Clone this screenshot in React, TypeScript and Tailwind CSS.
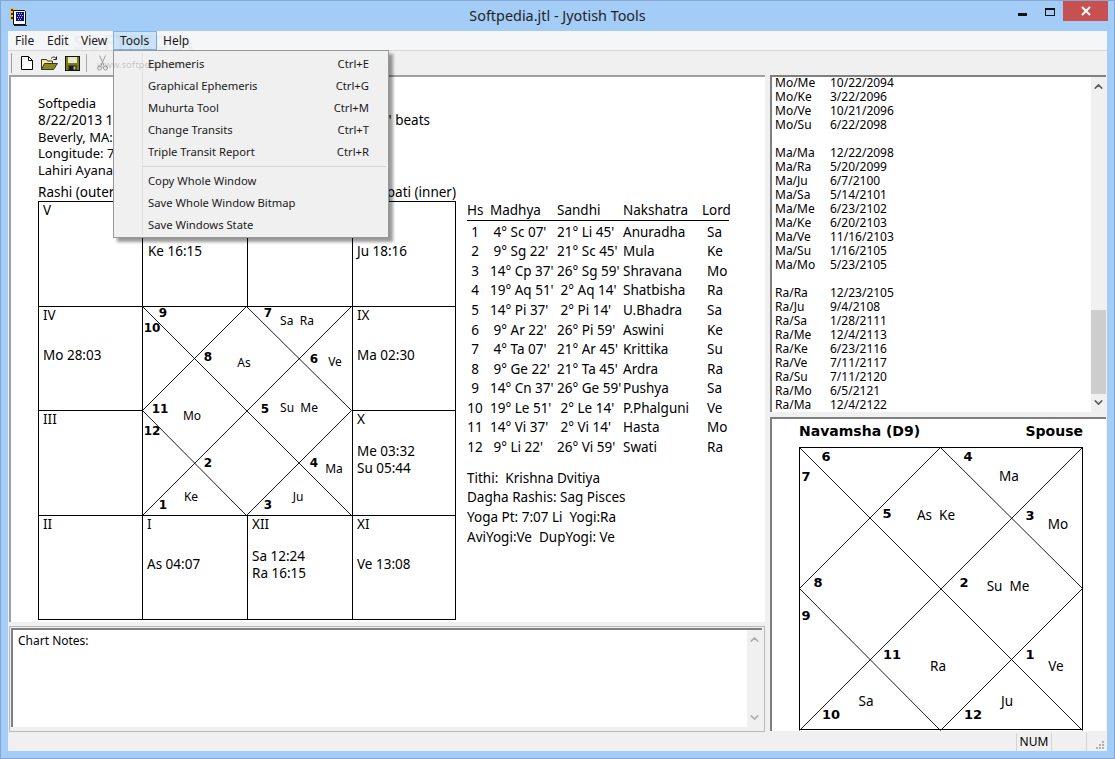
import { ChevronDown, ChevronUp } from 'lucide-react';

const MENU_ITEMS = [
  { label: 'Ephemeris', keys: 'Ctrl+E' },
  { label: 'Graphical Ephemeris', keys: 'Ctrl+G' },
  { label: 'Muhurta Tool', keys: 'Ctrl+M' },
  { label: 'Change Transits', keys: 'Ctrl+T' },
  { label: 'Triple Transit Report', keys: 'Ctrl+R' },
];

const MENU_ITEMS_2 = ['Copy Whole Window', 'Save Whole Window Bitmap', 'Save Windows State'];

const HOUSES = [
  ['1', " 4° Sc 07'", "21° Li 45'", 'Anuradha', 'Sa'],
  ['2', " 9° Sg 22'", "21° Sc 45'", 'Mula', 'Ke'],
  ['3', "14° Cp 37'", "26° Sg 59'", 'Shravana', 'Mo'],
  ['4', "19° Aq 51'", " 2° Aq 14'", 'Shatbisha', 'Ra'],
  ['5', "14° Pi 37'", " 2° Pi 14'", 'U.Bhadra', 'Sa'],
  ['6', " 9° Ar 22'", "26° Pi 59'", 'Aswini', 'Ke'],
  ['7', " 4° Ta 07'", "21° Ar 45'", 'Krittika', 'Su'],
  ['8', " 9° Ge 22'", "21° Ta 45'", 'Ardra', 'Ra'],
  ['9', "14° Cn 37'", "26° Ge 59'", 'Pushya', 'Sa'],
  ['10', "19° Le 51'", " 2° Le 14'", 'P.Phalguni', 'Ve'],
  ['11', "14° Vi 37'", " 2° Vi 14'", 'Hasta', 'Mo'],
  ['12', " 9° Li 22'", "26° Vi 59'", 'Swati', 'Ra'],
];

const DASHAS = [
  ['Mo/Me', '10/22/2094'],
  ['Mo/Ke', '3/22/2096'],
  ['Mo/Ve', '10/21/2096'],
  ['Mo/Su', '6/22/2098'],
  [],
  ['Ma/Ma', '12/22/2098'],
  ['Ma/Ra', '5/20/2099'],
  ['Ma/Ju', '6/7/2100'],
  ['Ma/Sa', '5/14/2101'],
  ['Ma/Me', '6/23/2102'],
  ['Ma/Ke', '6/20/2103'],
  ['Ma/Ve', '11/16/2103'],
  ['Ma/Su', '1/16/2105'],
  ['Ma/Mo', '5/23/2105'],
  [],
  ['Ra/Ra', '12/23/2105'],
  ['Ra/Ju', '9/4/2108'],
  ['Ra/Sa', '1/28/2111'],
  ['Ra/Me', '12/4/2113'],
  ['Ra/Ke', '6/23/2116'],
  ['Ra/Ve', '7/11/2117'],
  ['Ra/Su', '7/11/2120'],
  ['Ra/Mo', '6/5/2121'],
  ['Ra/Ma', '12/4/2122'],
];

const SMALL_LABELS = [
  { t: '9', b: true, c: 'left-[21px] top-[7px]' },
  { t: '10', b: true, c: 'left-[10px] top-[22px]' },
  { t: '7', b: true, c: 'left-[126px] top-[7px]' },
  { t: 'Sa  Ra', c: 'left-[155px] top-[15px]' },
  { t: '8', b: true, c: 'left-[66px] top-[51px]' },
  { t: 'As', c: 'left-[102px] top-[57px]' },
  { t: '6', b: true, c: 'left-[172px] top-[53px]' },
  { t: 'Ve', c: 'left-[193px] top-[56px]' },
  { t: '11', b: true, c: 'left-[18px] top-[103px]' },
  { t: 'Mo', c: 'left-[50px] top-[110px]' },
  { t: '5', b: true, c: 'left-[123px] top-[103px]' },
  { t: 'Su  Me', c: 'left-[157px] top-[102px]' },
  { t: '12', b: true, c: 'left-[10px] top-[125px]' },
  { t: '2', b: true, c: 'left-[66px] top-[157px]' },
  { t: '4', b: true, c: 'left-[172px] top-[157px]' },
  { t: 'Ma', c: 'left-[192px] top-[163px]' },
  { t: 'Ke', c: 'left-[49px] top-[191px]' },
  { t: 'Ju', c: 'left-[156px] top-[191px]' },
  { t: '1', b: true, c: 'left-[21px] top-[199px]' },
  { t: '3', b: true, c: 'left-[126px] top-[199px]' },
];

const NAVAMSHA_LABELS = [
  { t: '6', b: true, c: 'left-[27px] top-[9px]' },
  { t: '7', b: true, c: 'left-[7px] top-[29px]' },
  { t: '4', b: true, c: 'left-[169px] top-[9px]' },
  { t: 'Ma', c: 'left-[210px] top-[30px]' },
  { t: '5', b: true, c: 'left-[88px] top-[66px]' },
  { t: 'As  Ke', c: 'left-[137px] top-[69px]' },
  { t: '3', b: true, c: 'left-[231px] top-[68px]' },
  { t: 'Mo', c: 'left-[259px] top-[78px]' },
  { t: '8', b: true, c: 'left-[19px] top-[135px]' },
  { t: '2', b: true, c: 'left-[165px] top-[135px]' },
  { t: 'Su  Me', c: 'left-[209px] top-[140px]' },
  { t: '9', b: true, c: 'left-[7px] top-[168px]' },
  { t: '11', b: true, c: 'left-[93px] top-[207px]' },
  { t: 'Ra', c: 'left-[139px] top-[220px]' },
  { t: '1', b: true, c: 'left-[231px] top-[207px]' },
  { t: 'Ve', c: 'left-[257px] top-[220px]' },
  { t: 'Sa', c: 'left-[67px] top-[255px]' },
  { t: 'Ju', c: 'left-[208px] top-[255px]' },
  { t: '10', b: true, c: 'left-[32px] top-[267px]' },
  { t: '12', b: true, c: 'left-[174px] top-[267px]' },
];

type Label = { t: string; b?: boolean; c: string };

// the diamond lines of the north indian chart, s is the side of the square in px
function DiamondLines({ s }: { s: number }) {
  const m = Math.floor(s / 2);
  return (
    <svg className="absolute left-0 top-0" width={s + 1} height={s + 1} viewBox={`-0.5 -0.5 ${s + 1} ${s + 1}`} fill="none" stroke="#000" strokeWidth="0.9">
      <path d={`M0 0L${s} ${s}M${s} 0L0 ${s}`} />
      <path d={`M${m} 0L0 ${m}L${m} ${s}L${s} ${m}Z`} />
    </svg>
  );
}

function ChartLabels({ labels, big }: { labels: Label[]; big?: boolean }) {
  return (
    <>
      {labels.map((l) => (
        <span
          key={l.t}
          className={`absolute -translate-x-1/2 -translate-y-1/2 leading-none whitespace-pre ${l.c} ${
            l.b
              ? `font-['DejaVu_Sans',sans-serif] font-bold ${big ? 'text-[13px]' : 'text-[12px]'}`
              : big
                ? 'text-[13.5px]'
                : 'text-[12px]'
          }`}
        >
          {l.t}
        </span>
      ))}
    </>
  );
}

function Cell({ className, roman, children }: { className?: string; roman?: string; children?: React.ReactNode }) {
  return (
    <div className={`pl-[4px] leading-[17px] ${className ?? ''}`}>
      <div className="h-[17px]">{roman}</div>
      {children}
    </div>
  );
}

function Rashi() {
  return (
    <div className="w-[418px] h-[419px] border border-black grid grid-cols-[104px_105px_105px_102px] grid-rows-[105px_104px_105px_103px] text-[13.5px]">
      <Cell className="border-r border-b border-black" roman="V" />
      <Cell className="border-r border-b border-black">
        <div className="mt-[24px] pl-[1px]">Ke 16:15</div>
      </Cell>
      <Cell className="border-r border-b border-black" />
      <Cell className="border-b border-black">
        <div className="mt-[24px]">Ju 18:16</div>
      </Cell>

      <Cell className="border-r border-b border-black" roman="IV">
        <div className="mt-[23px]">Mo 28:03</div>
      </Cell>
      <div className="col-span-2 row-span-2 border-r border-b border-black relative">
        <div className="absolute -left-px -top-px">
          <DiamondLines s={209} />
          <ChartLabels labels={SMALL_LABELS} />
        </div>
      </div>
      <Cell className="border-b border-black" roman="IX">
        <div className="mt-[23px]">Ma 02:30</div>
      </Cell>

      <Cell className="border-r border-b border-black" roman="III" />
      <Cell className="border-b border-black" roman="X">
        <div className="mt-[15px]">Me 03:32</div>
        <div>Su 05:44</div>
      </Cell>

      <Cell className="border-r border-black" roman="II" />
      <Cell className="border-r border-black" roman="I">
        <div className="mt-[23px]">As 04:07</div>
      </Cell>
      <Cell className="border-r border-black" roman="XII">
        <div className="mt-[15px]">Sa 12:24</div>
        <div>Ra 16:15</div>
      </Cell>
      <Cell roman="XI">
        <div className="mt-[23px]">Ve 13:08</div>
      </Cell>
    </div>
  );
}

function HouseTable() {
  return (
    <div className="text-[13.5px] text-black">
      <div className="w-[262px] h-[20px] grid grid-cols-[23px_67px_66px_79px_27px] items-center border-b-[1.5px] border-black mb-[1.5px]">
        <span>Hs</span>
        <span>Madhya</span>
        <span>Sandhi</span>
        <span>Nakshatra</span>
        <span>Lord</span>
      </div>
      {HOUSES.map((h) => (
        <div key={h[0]} className="h-[19.6px] grid grid-cols-[23px_67px_66px_79px_27px] items-center whitespace-pre">
          <span className="w-[16px] text-center">{h[0]}</span>
          <span>{h[1]}</span>
          <span>{h[2]}</span>
          <span>{h[3]}</span>
          <span className="pl-[5px]">{h[4]}</span>
        </div>
      ))}
      <div className="mt-[11.5px] leading-[19.6px] whitespace-pre">
        <div>Tithi:  Krishna Dvitiya</div>
        <div>Dagha Rashis: Sag Pisces</div>
        <div>Yoga Pt: 7:07 Li  Yogi:Ra</div>
        <div>AviYogi:Ve  DupYogi: Ve</div>
      </div>
    </div>
  );
}

function ScrollBar({ faded, children }: { faded?: boolean; children?: React.ReactNode }) {
  return (
    <div className={`w-[15px] shrink-0 bg-[#f0f0f0] flex flex-col items-center relative ${faded ? 'text-[#b0b0b0]' : 'text-[#606060]'}`}>
      <ChevronUp size={13} strokeWidth={3} className="mt-[3px]" />
      <div className="flex-1 w-full">{children}</div>
      <ChevronDown size={13} strokeWidth={3} className="mb-[3px]" />
    </div>
  );
}

function AppIcon() {
  return (
    <svg width="17" height="18" viewBox="0 0 17 18" className="ml-[9px]">
      <rect x="0" y="0" width="5" height="12" fill="#f0c020" />
      <path d="M1 1h2v2h-2zM1 5h2v2h-2zM1 9h2v2h-2z" fill="#2030a0" />
      <path d="M3.500 2.500h11l1 1v13h-12z" fill="#fff" stroke="#101010" />
      <rect x="6" y="4" width="8" height="9" fill="#101080" />
      <path d="M7 5h1v1h-1zM9 5h1v1h-1zM11 5h1v1h-1zM8 7h1v1h-1zM10 7h1v1h-1zM12 7h1v1h-1zM7 9h1v1h-1zM9 9h1v1h-1zM11 9h1v1h-1zM8 11h1v1h-1zM10 11h1v1h-1z" fill="#c8d0f8" />
      <path d="M4 17h13v1h-13z" fill="#202020" />
    </svg>
  );
}

function Toolbar() {
  return (
    <div className="h-[24px] bg-[#f0f0f0] flex items-center relative">
      <div className="ml-[3px] w-[2px] h-[20px] border-l border-[#a0a0a0] border-r-white" />
      <svg width="14" height="16" viewBox="0 0 14 16" className="ml-[7px]" fill="#fff" stroke="#000">
        <path d="M1.500 1.500h7l4 4v9h-11z" />
        <path d="M8.500 1.500v4h4" fill="none" />
      </svg>
      <svg width="17" height="15" viewBox="0 0 17 15" className="ml-[7px]">
        <path d="M.5 3.500h5l1 1.500h5v8h-11z" fill="#ffe99a" stroke="#333" />
        <path d="M.5 13.500l3-6h13l-4 6z" fill="#8c8a1c" stroke="#333" />
        <path d="M10 2.500c2-2 4-2 5.500 .5M15.500 .5v3h-3" fill="none" stroke="#222" />
      </svg>
      <svg width="15" height="15" viewBox="0 0 15 15" className="ml-[7px]">
        <rect x=".5" y=".5" width="14" height="14" fill="#7c7c14" stroke="#111" />
        <rect x="3" y="1" width="9" height="6" fill="#e8e8c8" />
        <rect x="3.500" y="9.500" width="8" height="5" fill="#1a1a1a" />
        <rect x="8.500" y="10.500" width="2" height="3" fill="#bbb" />
      </svg>
      <div className="ml-[6px] w-px h-[18px] bg-[#a8a8a8]" />
      <svg width="11" height="16" viewBox="0 0 11 16" className="ml-[10px]" fill="none" stroke="#9c9c9c">
        <path d="M2.500 .5l4.500 10M8.500 .5l-4.500 10" />
        <circle cx="2.500" cy="13" r="2" />
        <circle cx="8.500" cy="13" r="2" />
      </svg>
      {/* site watermark, printed over the whole picture */}
      <span className="absolute left-[89px] top-[9px] z-30 text-[9.5px] leading-none text-[rgba(0,0,0,0.2)] pointer-events-none">www.softpedia.com</span>
    </div>
  );
}

function ToolsMenu() {
  return (
    <div className="absolute left-[-1px] top-full w-[276px] h-[188px] bg-[#f0f0f0] border border-[#979797] shadow-[4px_4px_3px_rgba(0,0,0,0.4)] z-20 py-[2px] text-[11.25px] text-[#1a1a1a]">
      <div className="absolute left-[28px] top-[2px] bottom-[2px] w-px bg-[#e0e0e0]" />
      {MENU_ITEMS.map((m) => (
        <div key={m.label} className="h-[22px] flex items-center justify-between pl-[34px] pr-[19px]">
          <span>{m.label}</span>
          <span>{m.keys}</span>
        </div>
      ))}
      <div className="h-[7px] flex items-center pl-[29px] pr-[2px]">
        <div className="w-full h-px bg-[#d4d4d4]" />
      </div>
      {MENU_ITEMS_2.map((m) => (
        <div key={m} className="h-[22px] flex items-center pl-[34px]">
          {m}
        </div>
      ))}
    </div>
  );
}

function MenuBar() {
  return (
    <div className="h-[19px] bg-[#f5f6f7] flex pl-[1px] text-[12px] text-[#1a1a1a] relative">
      <div className="w-[32px] pl-[6px] leading-[19px]">File</div>
      <div className="w-[34px] pl-[6px] leading-[19px]">Edit</div>
      <div className="w-[39px] pl-[6px] leading-[19px]">View</div>
      <div className="w-[42px] relative">
        <div className="h-[19px] pl-[6px] leading-[18px] bg-[#cde4f7] border border-[#7fb4e0] -mx-px">Tools</div>
        <ToolsMenu />
      </div>
      <div className="pl-[7px] leading-[19px]">Help</div>
      <span className="absolute left-[65px] top-[-1px] z-30 text-[22px] leading-none font-bold text-[rgba(0,0,0,0.05)] pointer-events-none">SOFTPEDIA</span>
    </div>
  );
}

export default function App() {
  return (
    <div className="w-[1115px] h-[759px] bg-[#a3ccf7] border border-[#85a6d0] flex flex-col overflow-hidden font-['Noto_Sans',sans-serif] text-black">
      {/* title bar */}
      <div className="h-[30px] shrink-0 flex items-start relative">
        <div className="mt-[7px]">
          <AppIcon />
        </div>
        <div className="absolute inset-x-0 top-0 h-[29px] flex items-center justify-center text-[14.4px] text-[#1f1f1f]">Softpedia.jtl - Jyotish Tools</div>
        <div className="ml-auto mr-[6px] flex items-start">
          <div className="w-[9px] h-[3px] bg-[#111] mt-[12px] mr-[18px]" />
          <div className="w-[10px] h-[8px] border border-t-2 border-[#111] mt-[7px] mr-[8px]" />
          <div className="w-[45px] h-[20px] bg-[#c75050] flex items-center justify-center text-white">
            <svg width="10" height="10" viewBox="0 0 10 10" stroke="#fff" strokeWidth="2">
              <path d="M1 1l8 8M9 1l-8 8" />
            </svg>
          </div>
        </div>
      </div>

      {/* client area */}
      <div className="flex-1 mx-[7px] mb-[7px] bg-[#f0f0f0] flex flex-col min-h-0">
        <MenuBar />
        <div className="h-[1px] bg-[#d6d6d6]" />
        <Toolbar />

        <div className="flex-1 flex min-h-0">
          {/* left column */}
          <div className="w-[762px] shrink-0 flex flex-col">
            <div className="ml-[1px] w-[756px] h-[547px] bg-white border-l-2 border-t-2 border-[#a0a0a0] pl-[27px] pt-[18px] text-[13.5px] leading-[16.75px]">
              <div className="text-[13px]">Softpedia</div>
              <div className="w-[392px] flex justify-between whitespace-pre">
                <span>8/22/2013 1</span>
                <span>' beats</span>
              </div>
              <div className="text-[13px]">Beverly, MA:</div>
              <div className="text-[13px]">Longitude: 7</div>
              <div className="text-[13px]">Lahiri Ayana</div>
              <div className="mt-[5.25px] w-[418px] flex justify-between">
                <span>Rashi (outer</span>
                <span>pati (inner)</span>
              </div>
              <div className="flex gap-[11px] leading-[17px]">
                <Rashi />
                <HouseTable />
              </div>
            </div>

            <div className="mt-[4px] ml-[1px] w-[756px] h-[106px] border border-[#b8b8b8] pt-[1px] pl-[1px] pr-[2px] pb-[4px] flex">
              <div className="flex-1 flex bg-white border-t-2 border-l-2 border-[#808080]">
                <div className="flex-1 pl-[5px] pt-[3px] text-[12px] leading-[16px]">Chart Notes:</div>
                <ScrollBar faded />
              </div>
            </div>
          </div>

          {/* right column */}
          <div className="w-[336px] shrink-0 flex flex-col">
            <div className="h-[337px] bg-white border-l-2 border-t-2 border-[#808080] flex">
              <div className="flex-1 pl-[3px] text-[12px] leading-[14px] -mt-px">
                {DASHAS.map((d, i) => (
                  <div key={i} className="h-[14px] flex">
                    <span className="w-[55px]">{d[0]}</span>
                    <span>{d[1]}</span>
                  </div>
                ))}
              </div>
              <ScrollBar>
                <div className="mt-[217px] h-[84px] bg-[#cdcdcd]" />
              </ScrollBar>
            </div>

            <div className="mt-[5px] h-[314px] bg-white border-l-2 border-t-2 border-[#808080] pl-[27px]">
              <div className="w-[284px] h-[28px] pb-[4px] flex items-center justify-between font-['DejaVu_Sans',sans-serif] font-bold text-[14px]">
                <span>Navamsha (D9)</span>
                <span>Spouse</span>
              </div>
              <div className="w-[284px] h-[283px] border border-black relative">
                <div className="absolute -left-px -top-px">
                  <DiamondLines s={283} />
                  <ChartLabels labels={NAVAMSHA_LABELS} big />
                </div>
              </div>
            </div>
          </div>
        </div>

        {/* status bar */}
        <div className="h-[18px] shrink-0 flex justify-end items-stretch text-[12px] relative">
          <div className="w-[36px] border-x border-[#d4d4d4] flex items-center justify-center">NUM</div>
          <div className="w-[35px] border-r border-[#d4d4d4] mr-[20px]" />
          <svg width="10" height="10" viewBox="0 0 10 10" className="absolute right-[2px] bottom-[1px]" fill="#b0b0b0">
            <path d="M7 1h2v2h-2zM4 4h2v2h-2zM7 4h2v2h-2zM1 7h2v2h-2zM4 7h2v2h-2zM7 7h2v2h-2z" />
          </svg>
        </div>
      </div>
    </div>
  );
}
